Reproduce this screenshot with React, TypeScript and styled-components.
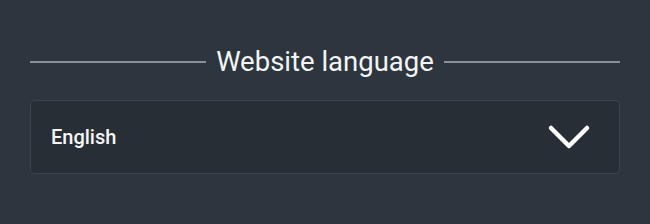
import React from 'react';
import styled, { createGlobalStyle } from 'styled-components';

const GlobalStyle = createGlobalStyle`
  html, body {
    margin: 0;
    padding: 0;
    background: #2d353e;
    font-family: Roboto, 'Liberation Sans', sans-serif;
  }
`;

const Page = styled.div`
  width: 650px;
  height: 224px;
  box-sizing: border-box;
  padding: 44px 30px 0 30px;
  display: flex;
  flex-direction: column;
  gap: 20px;
`;

const Heading = styled.div`
  display: flex;
  align-items: center;
  gap: 10px;
  height: 36px;
`;

const Rule = styled.div`
  flex: 1;
  height: 1.5px;
  background: #8a9097;
`;

const Title = styled.span`
  color: #f2f4f6;
  font-size: 27.5px;
  font-weight: 400;
  line-height: 36px;
`;

const SelectBox = styled.button`
  display: flex;
  align-items: center;
  justify-content: space-between;
  height: 74px;
  box-sizing: border-box;
  padding: 0 28px 0 20px;
  background: #282e36;
  border: 1.5px solid #3b434c;
  border-radius: 5px;
  cursor: pointer;
  font-family: inherit;
`;

const Value = styled.span`
  color: #f5f6f7;
  font-size: 20px;
  font-weight: 500;
`;

const Chevron = () => (
  <svg width="44" height="28" viewBox="0 0 44 28" fill="none">
    <path d="M4 5 L22 23 L40 5" stroke="#ffffff" strokeWidth="4.5" strokeLinecap="round" strokeLinejoin="round" />
  </svg>
);

export default function App() {
  return (
    <>
      <GlobalStyle />
      <Page>
        <Heading>
          <Rule />
          <Title>Website language</Title>
          <Rule />
        </Heading>
        <SelectBox>
          <Value>English</Value>
          <Chevron />
        </SelectBox>
      </Page>
    </>
  );
}
